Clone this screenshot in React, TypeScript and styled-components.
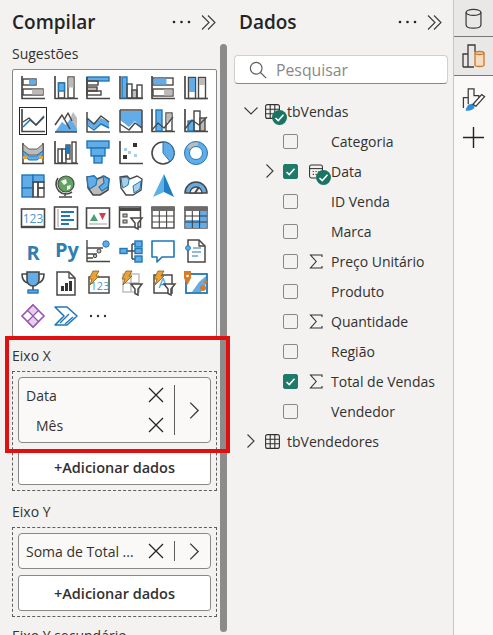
import React from 'react';
import styled, { createGlobalStyle } from 'styled-components';

const DK = '#4a4846';
const BL = '#62ace8';
const BS = '#1f78b8';
const GR = '#bdbbb9';
const SOFT = '#a9cfe8';

const GlobalStyle = createGlobalStyle`
  html, body {
    margin: 0;
    padding: 0;
    background: #f3f2f1;
    font-family: "Open Sans", "Liberation Sans", sans-serif;
    color: #252423;
  }
`;

const Box = ({ x, y, w, h, f = 'none', s = DK, sw = 1.4 }: { x: number; y: number; w: number; h: number; f?: string; s?: string; sw?: number }) => (
  <rect x={x} y={y} width={w} height={h} fill={f} stroke={s} strokeWidth={sw} />
);

const Line = ({ d, s = DK, sw = 1.5, f = 'none' }: { d: string; s?: string; sw?: number; f?: string }) => (
  <path d={d} stroke={s} strokeWidth={sw} fill={f} strokeLinejoin="round" />
);

const Axis = () => <Line d="M1 0v22.5h23" sw={1.7} />;

const Bolt = () => <path d="M7 0h6l-3 5h3L4 14l2-6H3z" fill="#e8a33d" stroke="#8a5a12" strokeWidth="0.8" />;

const Funnel = ({ x = 0, y = 0 }: { x?: number; y?: number }) => (
  <path transform={`translate(${x} ${y})`} d="M0 0h11l-4 5v6l-3-1.5V5z" fill="#fff" stroke={DK} strokeWidth="1.5" />
);

const chartIcons: React.ReactNode[] = [
  <><Axis /><Box x={2} y={3} w={13} h={6} /><rect x={8} y={3.5} width={7} height={5} fill={BL} /><Box x={2} y={13} w={20} h={6} /><rect x={11} y={13.5} width={11} height={5} fill={GR} /></>,
  <><Axis /><Box x={4.5} y={7} w={6} h={15} /><Box x={4.5} y={7} w={6} h={8} f={BL} s={BS} /><Box x={14} y={1} w={6} h={21} /><rect x={14.5} y={1.5} width={5} height={10} fill={GR} /></>,
  <><Box x={1} y={1} w={22} h={4} f={BL} s={BS} /><Box x={1} y={5} w={11} h={4} /><Box x={1} y={11} w={10} h={4} f={GR} /><Box x={1} y={15} w={14} h={4} /><Line d="M1 1v21.5h23" sw={1.7} /></>,
  <><Axis /><Box x={3} y={1} w={5} h={21} f={BL} s={BS} /><Box x={8} y={8} w={5} h={14} /><Box x={13} y={14} w={5} h={8} f={GR} /><Box x={18} y={9} w={5} h={13} /></>,
  <><Box x={2} y={2} w={20} h={7} /><rect x={2.5} y={2.5} width={13} height={6} fill={BL} /><Box x={2} y={13} w={20} h={7} /><rect x={13} y={13.5} width={8.5} height={6} fill={GR} /><Axis /></>,
  <><Axis /><Box x={4.5} y={1.5} w={7} h={21} /><rect x={5} y={2} width={6} height={14} fill={BL} /><Box x={14.5} y={1.5} w={7} h={21} /><rect x={15} y={2} width={6} height={7} fill={GR} /></>,
  <><Axis /><Line d="M2 18l7-7 6 5 8-9" s={BS} /><Line d="M2 13l6-4 7 7 8-8" /></>,
  <><path d="M1 23l7-10 4 3 4-6 7 7v6z" fill={BL} /><path d="M16 10l3-7 4 6v11l-5-8z" fill={GR} /><Line d="M1 16l7-10 8 14M10 11l4-7 4 8M1 23h22" /></>,
  <><path d="M1 9l7 6 7-6 8 4v6l-8-4-7 5-7-5z" fill={BL} /><Line d="M1 3v20h23M1 9l7 6 7-8 8 6" /><Line d="M1 16l7 5 7-6 8 4" s={BS} /></>,
  <><path d="M1 2h22v19l-7-9-6 6-9-7z" fill={BL} /><Line d="M1 1h22M1 1v22h23M23 1v22" /><Line d="M1 15l9 6 6-7 7 5" /></>,
  <><Axis /><Box x={5} y={1} w={6} h={21} f={BL} s={BS} /><Box x={15} y={4} w={6} h={18} /><rect x={15.5} y={4.5} width={5} height={8} fill={GR} /><Line d="M1 21l6-7 6 5 9-11" sw={1.3} /></>,
  <><Axis /><Box x={4} y={12} w={6} h={10} f={BL} s={BS} /><Box x={10} y={2} w={6} h={20} /><Box x={16} y={9} w={5} h={13} f={GR} /><Line d="M1 20l7-9 7 5 8-8" sw={1.3} /></>,
  <><Line d="M1 22.5h22M2 2v21M22 2v21" sw={1.5} /><path d="M2 3l6 5h8l6-5v7l-6 4h-8l-6-4z" fill={GR} stroke={DK} strokeWidth="0.8" /><path d="M2 10l6 5h8l6-5v4l-6 5h-8l-6-5z" fill={BL} stroke={BS} /><path d="M2 15h4v3H2zM18 15h4v3h-4z" fill="#e8a33d" /></>,
  <><Axis /><Box x={4} y={8} w={4} h={14} /><Box x={8} y={8} w={4} h={14} /><Box x={12} y={4} w={4} h={14} /><rect x={12} y={4} width={4} height={9} fill={BS} /><Box x={18} y={1} w={4} h={21} /></>,
  <><Box x={1} y={0} w={22} h={7} f={BL} s={BS} /><Box x={5} y={7} w={14} h={8} f={BL} s={BS} /><Box x={8} y={15} w={8} h={7} f={BL} s={BS} /></>,
  <><Axis /><rect x={14} y={2} width={4} height={4} fill="#333" /><rect x={5} y={7} width={3} height={3} fill={SOFT} /><rect x={9} y={10} width={3} height={3} fill={SOFT} /><rect x={15} y={13} width={3} height={3} fill={SOFT} /><rect x={4} y={14} width={4} height={4} fill="#333" /></>,
  <><circle cx="12" cy="12" r="11" fill="#fff" stroke={DK} strokeWidth="1.6" /><path d="M12 1a11 11 0 0 1 7 19.5L12 12z" fill={BL} stroke={BS} strokeWidth="1" /></>,
  <><circle cx="12" cy="12" r="9" fill="none" stroke={BL} strokeWidth="5" /><path d="M4.5 7A9 9 0 0 1 14 3" fill="none" stroke={GR} strokeWidth="4.5" /><circle cx="12" cy="12" r="11.5" fill="none" stroke={BS} strokeWidth="1" /><circle cx="12" cy="12" r="6.5" fill="#fff" stroke={BS} strokeWidth="1" /></>,
  <><Box x={1} y={1} w={11} h={13} f={BL} s={BS} /><Box x={1} y={14} w={11} h={9} f={BL} s={BS} /><Box x={12} y={1} w={11} h={7} f={BL} s={BS} /><Box x={12} y={8} w={5} h={15} s={DK} /><Box x={17} y={8} w={6} h={6} s={DK} /><Box x={17} y={14} w={6} h={9} s={DK} /></>,
  <><circle cx="12" cy="10" r="8" fill="#5fa45f" stroke={DK} strokeWidth="1.2" /><path d="M7 7l5-2 1 4-3 2zM13 12l4-1-1 4-3 1z" fill="#f3f2f1" /><Line d="M4 4a10 10 0 0 0 14 14M11 19v3M5 23h13" sw={1.6} /></>,
  <><path d="M1 3l7-1 3 3 7-3 5 3-1 11-8 5H7l-5-7z" fill={GR} stroke={DK} strokeWidth="1.5" /><path d="M1 3l7-1 3 3-1 6-6 4-2-3z" fill={BL} stroke={BS} strokeWidth="1.2" /><path d="M17 2l6 3-1 8-6 4-3-4 5-4z" fill={BL} stroke={BS} strokeWidth="1.2" /></>,
  <><path d="M1 3l7-1 3 3 7-3 5 3-1 11-8 5H7l-5-7z" fill="#fff" stroke={DK} strokeWidth="1.4" /><path d="M2 4l6-1 2 3-1 5-5 3-1-3zM14 12l8-5-1 8-6 4z" fill={SOFT} stroke={BS} strokeWidth="1" /></>,
  <><path d="M13 0L2 23l11-5z" fill="#5cb2e6" /><path d="M13 0l10 23-10-5z" fill="#1f7fc4" /></>,
  <><path d="M1 19a11 11 0 0 1 22 0z" fill={BL} stroke={DK} strokeWidth="1.5" /><path d="M6 19a6 6 0 0 1 12 0z" fill="#f3f2f1" stroke={DK} strokeWidth="1.3" /><path d="M11 19l4-6" stroke={DK} strokeWidth="2" /></>,
  <><Box x={0.5} y={3} w={23} h={18} f="#fff" sw={1.6} /><Line d="M0 21h24" sw={2.4} /><text x="12" y="17" textAnchor="middle" fontSize="12" fontFamily="Open Sans" fill="#4f97c9">123</text></>,
  <><Box x={0.5} y={1} w={23} h={22} f="#fff" sw={1.6} /><Line d="M4 3v18" s={GR} /><Line d="M7 6h13M7 10h9M7 14h13M7 18h8" s={BS} sw={2} /></>,
  <><Box x={0.5} y={2} w={23} h={20} f="#fff" sw={1.6} /><path d="M4 15l4-7 4 7z" fill="#4c9f70" /><path d="M13 7h7l-3.5 7z" fill="#d6404a" /><Line d="M3 18h18" s={GR} sw={1.4} /></>,
  <><Box x={0.5} y={1} w={21} h={20} f="#fff" sw={1.5} /><Line d="M0 3.5h22" sw={3} /><Box x={4} y={8} w={4} h={3} f={GR} sw={1} /><Box x={4} y={14} w={4} h={3} f={GR} sw={1} /><Funnel x={12} y={12} /></>,
  <><Box x={1} y={1} w={22} h={21} f="#fff" sw={1.4} /><Line d="M0 3h24" s="#6d6b69" sw={4} /><Line d="M1 10h22M1 16h22M8.3 5v17M15.6 5v17" sw={1.1} /></>,
  <><Box x={1} y={1} w={22} h={21} f="#fff" sw={1.4} /><Line d="M0 3h24" s="#6d6b69" sw={4} /><rect x={15.6} y={5} width={7} height={17} fill={BL} /><rect x={1.5} y={14} width={14} height={8} fill={BL} /><Line d="M1 10h22M1 16h22M8.3 5v17M15.6 5v17" s="#3a3a3a" sw={1} /></>,
  <text x="12" y="21" textAnchor="middle" fontSize="20" fontWeight="700" fontFamily="Open Sans" fill="#2f7fb3">R</text>,
  <text x="13" y="18" textAnchor="middle" fontSize="20" fontWeight="700" fontFamily="Open Sans" fill="#2f7fb3">Py</text>,
  <><Line d="M1 1v21.5h23M1 9h16M1 15h10M1 19h6" sw={1.4} /><circle cx="20" cy="5" r="3.2" fill={BL} stroke={BS} /><circle cx="13" cy="12" r="2" fill={GR} stroke={DK} /><circle cx="9" cy="17" r="1.7" fill={GR} stroke={DK} /></>,
  <><Line d="M8 12h5M13 5v15M13 5h3M13 12h3M13 20h3" /><Box x={1} y={9.5} w={7} h={5} f={BL} s={BS} /><Box x={16} y={2} w={7} h={6} f={BL} s={BS} /><Box x={16} y={9.5} w={7} h={5} f={BL} s={BS} /><Box x={16} y={17} w={7} h={6} f={BL} s={BS} /></>,
  <path d="M1 2h22v16H11l-5 5v-5H1z" fill="#fff" stroke={BS} strokeWidth="1.6" strokeLinejoin="round" />,
  <><path d="M4 1h11l6 6v16H4z" fill="#fff" stroke={DK} strokeWidth="1.5" /><Line d="M15 1v6h6" sw={1.3} /><circle cx="4" cy="9" r="2.4" fill={BL} stroke={BS} /><Line d="M9 9h8M8 13h9M8 17h6" s={BS} sw={1.2} /></>,
  <><path d="M6 1h12v8a6 6 0 0 1-12 0z" fill={BL} stroke={DK} strokeWidth="1.6" /><Line d="M6 3H1c0 5 2 8 6 9M18 3h5c0 5-2 8-6 9M12 15v4" sw={1.6} /><Box x={7} y={19} w={10} h={3} f={BL} s={BS} /></>,
  <><path d="M3 1h12l6 6v17H3z" fill="#fff" stroke={DK} strokeWidth="1.5" /><Line d="M15 1v6h6" sw={1.3} /><rect x={7} y={15} width={3} height={5} fill="#333" /><rect x={11} y={12} width={3} height={8} fill="#333" /><rect x={15} y={10} width={3} height={10} fill="#333" /></>,
  <><Box x={3} y={6} w={20} h={16} f="#fff" sw={1.5} /><text x="14" y="19" textAnchor="middle" fontSize="11" fontFamily="Open Sans" fill="#4f97c9">123</text><Bolt /></>,
  <><Box x={4} y={3} w={16} h={18} f="#fff" s={GR} /><Line d="M12 3v18M4 12h16" s={GR} /><Bolt /><Funnel x={12} y={13} /></>,
  <><Box x={3} y={4} w={18} h={18} f="#fff" sw={1.5} /><text x="12" y="17" textAnchor="middle" fontSize="14" fontFamily="Open Sans" fill="#4f97c9">A</text><Bolt /><Funnel x={13} y={13} /></>,
  <><Box x={2} y={3} w={21} h={19} f="#fff" s={BS} sw={1.8} /><path d="M8 21l7-10 7-6v8l-5 8z" fill={BL} /><path d="M0 0h7v7l-3.5 7L0 7z" fill="#d97a26" /><circle cx="3.5" cy="5" r="1.3" fill="#fff" /><circle cx="19" cy="17" r="3" fill="#d97a26" /><circle cx="21.5" cy="11" r="1.8" fill="#d97a26" /></>,
  <><path d="M12 1l11 11-11 11L1 12z" fill="none" stroke="#9b55b0" strokeWidth="1.6" /><path d="M12 1l5.5 5.5L12 12 6.5 6.5zM12 12l5.5 5.5L12 23l-5.5-5.5z" fill="#e6cfec" stroke="#9b55b0" strokeWidth="1.3" /></>,
  <><path d="M1 3h12l10 9-10 9H1l9-9z" fill="#fff" stroke={BS} strokeWidth="1.6" strokeLinejoin="round" /><path d="M6 19l9-9M11 20l8-7" stroke={BS} strokeWidth="1.4" /></>,
  <><circle cx="5" cy="12" r="1.2" fill="#333" /><circle cx="12" cy="12" r="1.2" fill="#333" /><circle cx="19" cy="12" r="1.2" fill="#333" /></>,
];

const Dots = () => (
  <svg width="19" height="6" viewBox="0 0 19 6">
    <circle cx="2" cy="3" r="1.3" fill="#252423" />
    <circle cx="9.5" cy="3" r="1.3" fill="#252423" />
    <circle cx="17" cy="3" r="1.3" fill="#252423" />
  </svg>
);

const Collapse = () => (
  <svg width="15" height="15" viewBox="0 0 15 15" fill="none" stroke="#3b3a39" strokeWidth="1.1">
    <path d="M1 .5l7 7-7 7M7 .5l7 7-7 7" />
  </svg>
);

const Close = () => (
  <svg width="16" height="16" viewBox="0 0 16 16" stroke="#252423" strokeWidth="1.3">
    <path d="M1 1l14 14M15 1L1 15" />
  </svg>
);

const Chevron = ({ open, size = 14 }: { open?: boolean; size?: number }) =>
  open ? (
    <svg width={size} height={size} viewBox="0 0 14 14" fill="none" stroke="#3b3a39" strokeWidth="1.1">
      <path d="M0.5 3.5L7 10l6.5-6.5" />
    </svg>
  ) : (
    <svg width={size} height={size} viewBox="0 0 14 14" fill="none" stroke="#3b3a39" strokeWidth="1.1">
      <path d="M3.5 0.5L10 7l-6.5 6.5" />
    </svg>
  );

const TableIcon = () => (
  <svg width="15" height="15" viewBox="0 0 15 15" fill="none" stroke="#323130" strokeWidth="1.1">
    <rect x="0.6" y="0.6" width="13.8" height="13.8" rx="2" />
    <path d="M0.6 5.2h13.8M0.6 9.8h13.8M5.2 0.6v13.8M9.8 0.6v13.8" />
  </svg>
);

const CalendarIcon = () => (
  <svg width="15" height="15" viewBox="0 0 15 15" fill="none" stroke="#323130" strokeWidth="1.1">
    <rect x="0.6" y="0.6" width="13.8" height="13.8" rx="2" />
    <path d="M0.6 4.4h13.8" />
    <path d="M4 7.5h1.2M7 7.5h1.2M10 7.5h1.2M4 10.5h1.2M7 10.5h1.2M10 10.5h1.2" strokeWidth="1.3" />
  </svg>
);

const SigmaIcon = () => (
  <svg width="14" height="15" viewBox="0 0 14 15" fill="none" stroke="#323130" strokeWidth="1.1">
    <path d="M13 3V1H1.5l5.7 6.5L1.5 14H13v-2" />
  </svg>
);

const Tick = ({ size = 11 }: { size?: number }) => (
  <svg width={size} height={size} viewBox="0 0 11 11" fill="none" stroke="#fff" strokeWidth="1.6">
    <path d="M1.5 6l2.8 2.6L9.5 2.8" />
  </svg>
);

const Root = styled.div`
  position: relative;
  display: flex;
  width: 493px;
  height: 635px;
  overflow: hidden;
`;

const BuildPanel = styled.section`
  display: flex;
  flex-direction: column;
  width: 228px;
  padding-left: 12px;
  box-sizing: border-box;
  overflow: hidden;
`;

const DataPanel = styled.section`
  display: flex;
  flex-direction: column;
  width: 225px;
  padding-left: 11px;
  box-sizing: border-box;
`;

const PanelHeader = styled.header<{ $right: number }>`
  display: flex;
  align-items: center;
  flex: none;
  height: 44px;
  padding-right: ${({ $right }) => $right}px;
  gap: 10px;
`;

const Title = styled.h2`
  flex: 1;
  margin: 0;
  font-size: 19px;
  font-weight: 600;
  color: #252423;
`;

const BuildBody = styled.div`
  display: flex;
  flex: 1;
  min-height: 0;
`;

const BuildColumn = styled.div`
  width: 205px;
  flex: none;
`;

const Scrollbar = styled.div`
  width: 7px;
  height: 588px;
  margin-left: 3px;
  background: #8b8b8b;
  border-radius: 4px;
`;

const SectionLabel = styled.div<{ $top?: number }>`
  height: 20px;
  margin-top: ${({ $top }) => $top ?? 0}px;
  font-size: 14px;
  line-height: 20px;
  color: #323130;
`;

const VisualBox = styled.div`
  display: grid;
  grid-template-columns: repeat(6, 32.5px);
  grid-auto-rows: 32.5px;
  margin-top: 5px;
  padding: 2px 0 1px 4px;
  height: 268px;
  box-sizing: border-box;
  background: #fff;
  border: 1px solid #8a8886;
  border-radius: 2px;
`;

const VisualCell = styled.div<{ $selected?: boolean }>`
  display: flex;
  align-items: center;
  justify-content: center;

  svg {
    width: 24px;
    height: 24px;
    overflow: visible;
    ${({ $selected }) => $selected && 'outline: 1.5px solid #252423; outline-offset: 1px;'}
  }
`;

const DropZone = styled.div`
  display: flex;
  flex-direction: column;
  gap: 6px;
  margin-top: 5px;
  padding: 5px;
  border: 1px dashed #605e5c;
`;

const FieldPill = styled.div`
  display: flex;
  align-items: stretch;
  padding: 7px 0 7px 7px;
  background: #faf9f8;
  border: 1px solid #8a8886;
  border-radius: 4px;
`;

const FieldList = styled.div`
  display: flex;
  flex-direction: column;
  justify-content: center;
  gap: 10px;
  flex: 1;
  min-width: 0;
`;

const FieldRow = styled.div<{ $indent?: boolean }>`
  display: flex;
  align-items: center;
  justify-content: space-between;
  height: 20px;
  padding-left: ${({ $indent }) => ($indent ? 10 : 0)}px;
  font-size: 14px;
  color: #323130;
`;

const FieldMenu = styled.div`
  display: flex;
  align-items: center;
  justify-content: center;
  width: 36px;
  margin-left: 10px;
  padding-left: 4px;
  box-sizing: border-box;
  border-left: 1px solid #605e5c;
  flex: none;
`;

const AddButton = styled.button`
  height: 36px;
  padding: 0;
  background: #fff;
  border: 1px solid #8a8886;
  border-radius: 3px;
  font-family: inherit;
  font-size: 14.5px;
  font-weight: 600;
  color: #323130;
`;

const SearchBox = styled.div`
  display: flex;
  align-items: center;
  gap: 9px;
  width: 214px;
  height: 29px;
  box-sizing: border-box;
  margin: 11px 0 12px -5px;
  padding-left: 14px;
  background: #fff;
  border: 1px solid #d1d0ce;
  border-bottom-color: #8a8886;
  border-radius: 4px;
  font-size: 15.8px;
  color: #8a8886;
`;

const TreeRow = styled.div<{ $child?: boolean }>`
  display: flex;
  align-items: center;
  height: 30px;
  margin-left: -11px;
  padding-left: ${({ $child }) => ($child ? 35 : 16)}px;
  font-size: 14px;
  color: #323130;
`;

const Toggle = styled.span`
  display: flex;
  width: 14px;
  flex: none;
`;

const CheckBox = styled.span<{ $checked?: boolean }>`
  display: flex;
  align-items: center;
  justify-content: center;
  width: 15px;
  height: 15px;
  margin-left: 6px;
  box-sizing: border-box;
  flex: none;
  border: 1px solid ${({ $checked }) => ($checked ? '#1f7a68' : '#8a8886')};
  border-radius: 2px;
  background: ${({ $checked }) => ($checked ? '#1f7a68' : 'transparent')};
`;

const TypeSlot = styled.span<{ $table?: boolean }>`
  position: relative;
  display: flex;
  width: ${({ $table }) => ($table ? 15 : 14)}px;
  margin: 0 ${({ $table }) => ($table ? 7 : 8)}px 0 ${({ $table }) => ($table ? 7 : 11)}px;
  flex: none;
`;

const Badge = styled.span`
  position: absolute;
  left: 7px;
  top: 6px;
  display: flex;
  align-items: center;
  justify-content: center;
  width: 15px;
  height: 15px;
  border-radius: 50%;
  background: #1a7463;
`;

const SideTabs = styled.nav`
  display: flex;
  flex-direction: column;
  width: 40px;
  box-sizing: border-box;
  background: #faf9f8;
  border-left: 1px solid #c8c6c4;
`;

const SideTab = styled.div<{ $active?: boolean; $height: number }>`
  display: flex;
  align-items: center;
  justify-content: center;
  height: ${({ $height }) => $height}px;
  box-sizing: border-box;
  background: ${({ $active }) => ($active ? '#e9e8e6' : 'transparent')};
  border-bottom: ${({ $active }) => ($active ? '1.5px solid #797775' : 'none')};
`;

const Highlight = styled.div`
  position: absolute;
  left: 5px;
  top: 336px;
  width: 225px;
  height: 117px;
  box-sizing: border-box;
  border: 4px solid #e01010;
  pointer-events: none;
`;

const treeItems = [
  { label: 'Categoria' },
  { label: 'Data', calendar: true, checked: true, expandable: true },
  { label: 'ID Venda' },
  { label: 'Marca' },
  { label: 'Preço Unitário', sigma: true },
  { label: 'Produto' },
  { label: 'Quantidade', sigma: true },
  { label: 'Região' },
  { label: 'Total de Vendas', sigma: true, checked: true },
  { label: 'Vendedor' },
];

export default function App() {
  return (
    <Root>
      <GlobalStyle />

      <BuildPanel>
        <PanelHeader $right={12}>
          <Title>Compilar</Title>
          <Dots />
          <Collapse />
        </PanelHeader>
        <BuildBody>
          <BuildColumn>
            <SectionLabel>Sugestões</SectionLabel>
            <VisualBox>
              {chartIcons.map((icon, i) =>
                <VisualCell key={i} $selected={i === 6}>
                  <svg viewBox="0 0 24 24">{icon}</svg>
                </VisualCell>
              )}
            </VisualBox>

            <SectionLabel $top={9}>Eixo X</SectionLabel>
            <DropZone>
              <FieldPill>
                <FieldList>
                  <FieldRow>Data<Close /></FieldRow>
                  <FieldRow $indent>Mês<Close /></FieldRow>
                </FieldList>
                <FieldMenu><Chevron size={17} /></FieldMenu>
              </FieldPill>
              <AddButton>+Adicionar dados</AddButton>
            </DropZone>

            <SectionLabel $top={11}>Eixo Y</SectionLabel>
            <DropZone>
              <FieldPill>
                <FieldList>
                  <FieldRow>Soma de Total ...<Close /></FieldRow>
                </FieldList>
                <FieldMenu><Chevron size={17} /></FieldMenu>
              </FieldPill>
              <AddButton>+Adicionar dados</AddButton>
            </DropZone>

            <SectionLabel $top={9}>Eixo Y secundário</SectionLabel>
          </BuildColumn>
          <Scrollbar />
        </BuildBody>
      </BuildPanel>

      <DataPanel>
        <PanelHeader $right={11}>
          <Title>Dados</Title>
          <Dots />
          <Collapse />
        </PanelHeader>
        <SearchBox>
          <svg width="18" height="18" viewBox="0 0 20 20" fill="none" stroke="#605e5c" strokeWidth="1.3">
            <circle cx="8" cy="8" r="6.5" />
            <path d="M12.5 12.5L19 19" />
          </svg>
          Pesquisar
        </SearchBox>

        <TreeRow>
          <Toggle><Chevron open /></Toggle>
          <TypeSlot $table>
            <TableIcon />
            <Badge><Tick /></Badge>
          </TypeSlot>
          tbVendas
        </TreeRow>
        {treeItems.map((item) => (
          <TreeRow key={item.label} $child>
            <Toggle>{item.expandable && <Chevron />}</Toggle>
            <CheckBox $checked={item.checked}>{item.checked && <Tick />}</CheckBox>
            <TypeSlot>
              {item.sigma && <SigmaIcon />}
              {item.calendar && <CalendarIcon />}
              {item.calendar && <Badge><Tick /></Badge>}
            </TypeSlot>
            {item.label}
          </TreeRow>
        ))}
        <TreeRow>
          <Toggle><Chevron /></Toggle>
          <TypeSlot $table><TableIcon /></TypeSlot>
          tbVendedores
        </TreeRow>
      </DataPanel>

      <SideTabs>
        <SideTab $active $height={37}>
          <svg width="19" height="21" viewBox="0 0 20 24" fill="none" stroke="#3b3a39" strokeWidth="1.4">
            <ellipse cx="10" cy="5" rx="8.5" ry="3.5" />
            <path d="M1.5 5v14c0 2.5 3.5 4 8.5 4s8.5-1.5 8.5-4V5" />
          </svg>
        </SideTab>
        <SideTab $active $height={39}>
          <svg width="23" height="24" viewBox="0 0 23 24" fill="none" strokeWidth="1.3">
            <path d="M1 23V10h5M6 23V1h7v7M1 23h11" stroke="#3b3a39" />
            <path d="M13 9c0-2 9-2 9 0v12c0 2-9 2-9 0z" stroke="#c9782c" fill="#f6dcc0" />
            <path d="M13 9c0 2 9 2 9 0" stroke="#c9782c" />
          </svg>
        </SideTab>
        <SideTab $height={44}>
          <svg width="24" height="25" viewBox="0 0 24 26" fill="none" strokeWidth="1.3">
            <path d="M1 23V12h5M6 19V3h6v7h5v2" stroke="#3b3a39" />
            <path d="M4 25c1-4 3-6 6-6l2 2c0 3-3 4-8 4z" fill="#2f8fdc" stroke="#2f8fdc" />
            <path d="M11 19l9-10 3 2-9 10z" fill="#fff" stroke="#3b3a39" />
          </svg>
        </SideTab>
        <SideTab $height={34}>
          <svg width="23" height="23" viewBox="0 0 24 24" stroke="#252423" strokeWidth="1.5">
            <path d="M12 1v22M1 12h22" />
          </svg>
        </SideTab>
      </SideTabs>

      <Highlight />
    </Root>
  );
}
